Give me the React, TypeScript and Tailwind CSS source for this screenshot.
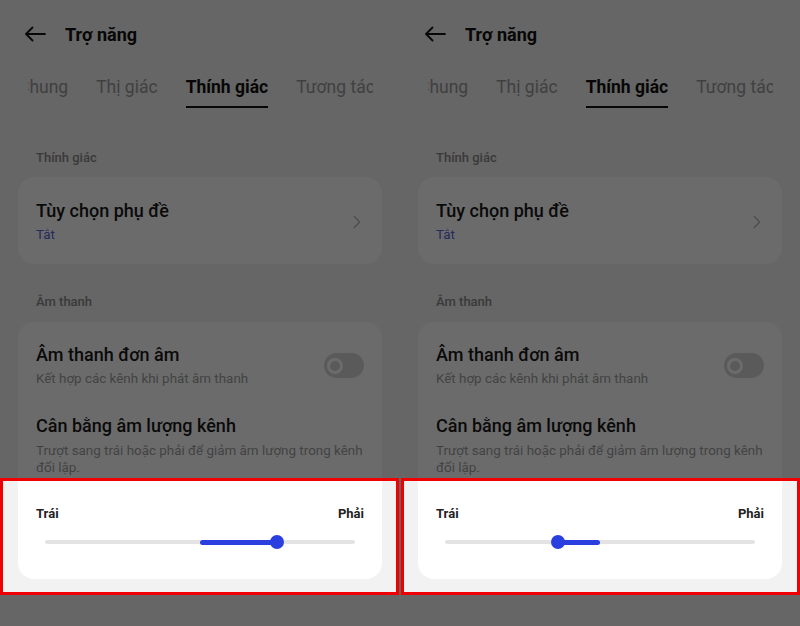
import { ChevronRight } from "lucide-react";

const TABS = ["Chung", "Thị giác", "Thính giác", "Tương tác"];
const ACTIVE_TAB = "Thính giác";

function BackArrow() {
  return (
    <svg width="22" height="16" viewBox="0 0 22 16" fill="none" aria-hidden>
      <path
        d="M21 8H2M8.5 1.5 2 8l6.5 6.5"
        stroke="#111"
        strokeWidth="1.8"
        strokeLinecap="round"
        strokeLinejoin="round"
      />
    </svg>
  );
}

function Toggle() {
  return (
    <div className="flex h-[25px] w-[40px] shrink-0 items-center rounded-full bg-[#d6d6d6] px-[3px]">
      <div className="h-[16px] w-[16px] rounded-full border-[3px] border-white" />
    </div>
  );
}

function BalanceSlider({ value }: { value: number }) {
  // thanh màu xanh luôn tính từ giữa
  const from = Math.min(value, 50);
  const to = Math.max(value, 50);

  return (
    <div className="relative mx-[9px] mt-[12px] flex h-[14px] items-center">
      <div className="h-[4px] w-full rounded-full bg-[#e3e3e3]" />
      <div
        className="absolute h-[5px] rounded-full bg-[#2b3fe0]"
        style={{ left: `${from}%`, width: `${to - from}%` }}
      />
      <div
        className="absolute h-[14px] w-[14px] -translate-x-1/2 rounded-full bg-[#2b3fe0]"
        style={{ left: `${value}%` }}
      />
    </div>
  );
}

function PhonePanel({ value, boxLeft }: { value: number; boxLeft: number }) {
  return (
    <div className="relative h-[626px] w-[400px] shrink-0 overflow-hidden bg-[#f2f2f2]">
      <header className="flex h-[68px] items-center gap-[19px] pl-[24px]">
        <BackArrow />
        <h1 className="text-[18px] font-bold text-[#111]">Trợ năng</h1>
      </header>

      <div className="ml-[28px] w-[345px] overflow-hidden pt-[7px]">
        <div className="-ml-[10px] flex gap-[28px] whitespace-nowrap">
          {TABS.map((tab) => (
            <div key={tab} className="flex flex-col items-center">
              <span
                className={
                  tab === ACTIVE_TAB
                    ? "text-[17.5px] font-bold leading-6 text-[#111]"
                    : "text-[17.5px] leading-6 text-[#9a9a9a]"
                }
              >
                {tab}
              </span>
              <div
                className={
                  tab === ACTIVE_TAB
                    ? "mt-[7px] h-[2px] w-full bg-[#111]"
                    : "mt-[7px] h-[2px] w-full"
                }
              />
            </div>
          ))}
        </div>
      </div>

      <h2 className="mt-[41px] pl-[36px] text-[13px] font-medium leading-[18px] text-[#8a8a8a]">
        Thính giác
      </h2>
      <div className="mx-[18px] mt-[10px] flex items-center rounded-[16px] bg-white px-[18px] pb-[20px] pt-[22px]">
        <div className="flex-1">
          <div className="text-[18px] font-medium leading-6 text-[#1a1a1a]">
            Tùy chọn phụ đề
          </div>
          <div className="mt-[3px] text-[13.4px] leading-[18px] text-[#5b66d6]">
            Tắt
          </div>
        </div>
        <ChevronRight size={22} strokeWidth={1.4} className="-mr-[4px] text-[#b5b5b5]" />
      </div>

      <h2 className="mt-[29px] pl-[36px] text-[13px] font-medium leading-[18px] text-[#8a8a8a]">
        Âm thanh
      </h2>
      <div className="mx-[18px] mt-[11px] rounded-[16px] bg-white px-[18px] pb-[30px] pt-[21px]">
        <div className="flex items-center gap-4">
          <div className="flex-1">
            <div className="text-[18px] font-medium leading-6 text-[#1a1a1a]">
              Âm thanh đơn âm
            </div>
            <div className="mt-[3px] text-[13.4px] leading-[18px] text-[#a0a0a0]">
              Kết hợp các kênh khi phát âm thanh
            </div>
          </div>
          <Toggle />
        </div>

        <div className="mt-[26px] text-[18px] font-medium leading-6 text-[#1a1a1a]">
          Cân bằng âm lượng kênh
        </div>
        <p className="mt-[4px] text-[13.4px] leading-[17px] text-[#a0a0a0]">
          Trượt sang trái hoặc phải để giảm âm lượng trong kênh đối lập.
        </p>

        <div className="mt-[29px] flex justify-between text-[13px] font-bold leading-[18px] text-[#222]">
          <span>Trái</span>
          <span>Phải</span>
        </div>
        <BalanceSlider value={value} />
      </div>

      {/* khung đỏ + lớp tối phủ phần còn lại */}
      <div
        className="absolute top-[478px] h-[117px] w-[399px] border-[3px] border-[#f00000] shadow-[0_0_0_1200px_rgba(0,0,0,0.58)]"
        style={{ left: boxLeft }}
      />
    </div>
  );
}

export default function App() {
  return (
    <div
      className="flex h-[626px] w-[800px] overflow-hidden bg-[#666]"
      style={{ fontFamily: "Roboto, 'Noto Sans', sans-serif" }}
    >
      <PhonePanel value={74.8} boxLeft={0} />
      <PhonePanel value={36.5} boxLeft={1} />
    </div>
  );
}
